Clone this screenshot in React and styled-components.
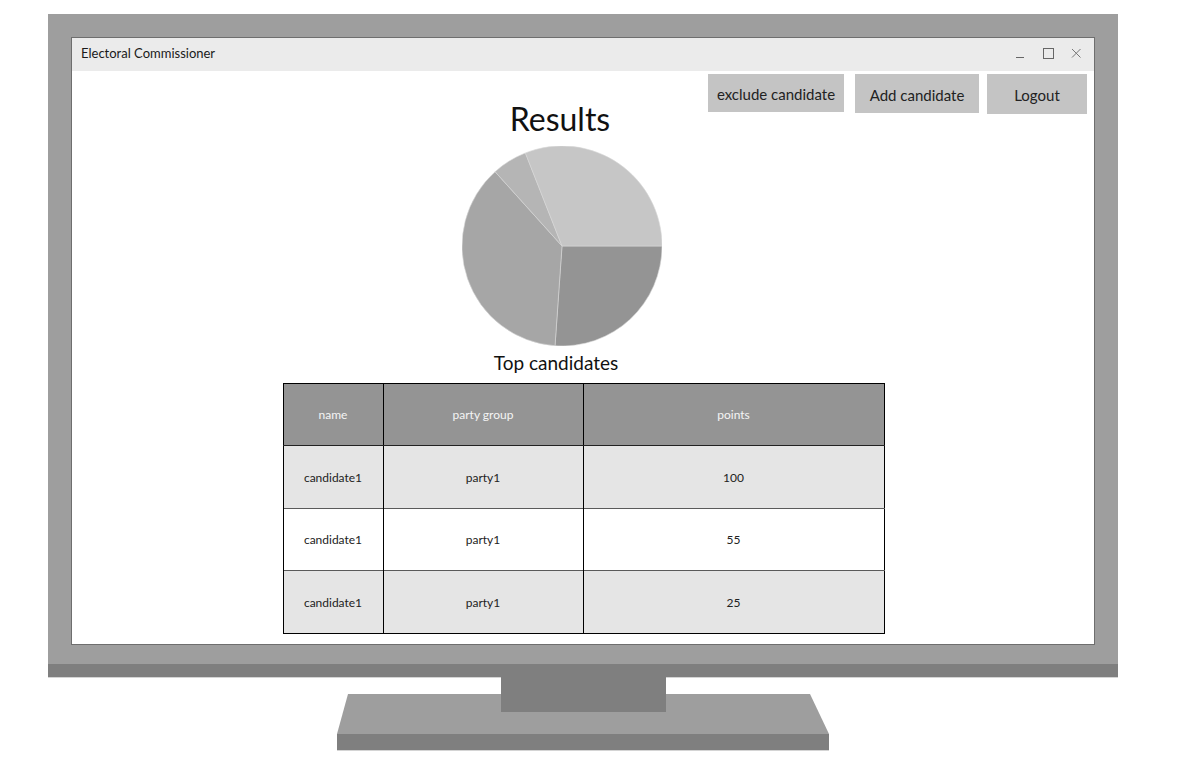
import React from "react";
import styled, { createGlobalStyle } from "styled-components";

const GlobalStyle = createGlobalStyle`
  html, body {
    margin: 0;
    padding: 0;
    background: #ffffff;
    font-family: Lato, "Liberation Sans", sans-serif;
  }
`;

const Page = styled.div`
  width: 1199px;
  height: 766px;
  padding-top: 14px;
  box-sizing: border-box;
`;

const Monitor = styled.div`
  width: 1070px;
  margin-left: 48px;
  display: flex;
  flex-direction: column;
  align-items: center;
`;

const Bezel = styled.div`
  width: 100%;
  box-sizing: border-box;
  background: #9e9e9e;
  padding: 23px 23px 19px 23px;
`;

const BezelBand = styled.div`
  width: 100%;
  height: 13px;
  background: #7f7f7f;
  box-shadow: 0 1px 0 #d4d4d4;
`;

const Screen = styled.div`
  height: 608px;
  box-sizing: border-box;
  border: 1px solid #6e6e6e;
  background: #ffffff;
  display: flex;
  flex-direction: column;
`;

const TitleBar = styled.div`
  height: 33px;
  box-sizing: border-box;
  flex-shrink: 0;
  background: #ebebeb;
  display: flex;
  align-items: center;
  justify-content: space-between;
  padding: 0 12px 3px 9px;
  font-size: 13px;
  color: #1a1a1a;
`;

const WindowControls = styled.div`
  display: flex;
  align-items: center;
  gap: 16px;
`;

const Content = styled.div`
  flex: 1;
  display: flex;
  flex-direction: column;
  align-items: center;
`;

const Toolbar = styled.div`
  align-self: stretch;
  display: flex;
  justify-content: flex-end;
  align-items: flex-start;
  padding: 3px 7px 0 0;
`;

const ToolButton = styled.button`
  width: ${(p) => p.$w}px;
  height: ${(p) => p.$h}px;
  margin-left: ${(p) => p.$gap}px;
  border: none;
  background: #c4c4c4;
  font-family: Lato, "Liberation Sans", sans-serif;
  font-size: 15px;
  color: #222;
  padding: 2px 0 0 0;
  cursor: pointer;
`;

const ChartBlock = styled.div`
  display: flex;
  flex-direction: column;
  align-items: center;
  margin-right: 46px;
  margin-top: -14px;
`;

const Title = styled.h1`
  margin: 0;
  font-size: 32px;
  line-height: 38px;
  font-weight: 400;
  color: #111;
`;

const Pie = styled.svg`
  display: block;
  margin-top: 8px;
  margin-left: 4px;
`;

const Subtitle = styled.h2`
  margin: 5px 0 0 0;
  font-size: 19px;
  line-height: 24px;
  font-weight: 400;
  color: #111;
  position: relative;
  left: -4px;
`;

const Table = styled.table`
  margin-top: 8px;
  margin-left: 1px;
  width: 598px;
  border-collapse: collapse;
  border: 1px solid #000;
  font-size: 12px;
  color: #222;
  table-layout: fixed;
`;

const HeadCell = styled.th`
  height: 61px;
  width: ${(p) => p.$w}px;
  background: #949494;
  color: #f4f4f4;
  font-weight: 400;
  border-left: 1px solid #000;
  border-bottom: 1px solid #222;
  padding: 0;
`;

const Row = styled.tr`
  background: ${(p) => (p.$alt ? "#e5e5e5" : "#ffffff")};
`;

const Cell = styled.td`
  height: ${(p) => p.$h}px;
  text-align: center;
  border-left: 1px solid #000;
  border-top: 1px solid ${(p) => (p.$first ? "#222" : "#5a5a5a")};
  padding: 0;
`;

const Stand = styled.div`
  display: flex;
  flex-direction: column;
  align-items: center;
`;

const Neck = styled.div`
  width: 165px;
  height: 35px;
  background: #7f7f7f;
  position: relative;
  z-index: 1;
`;

const BaseTop = styled.div`
  width: 492px;
  height: 40px;
  margin-top: -18px;
  background: #9e9e9e;
  clip-path: polygon(11px 0, calc(100% - 19px) 0, 100% 100%, 0 100%);
`;

const BaseFoot = styled.div`
  width: 492px;
  height: 16px;
  background: #7f7f7f;
  box-shadow: 0 1px 0 #d4d4d4;
`;

const slices = [
  { d: "M100,100 L200,100 A100,100 0 0 1 93.02,199.76 Z", fill: "#949494" },
  { d: "M100,100 L93.02,199.76 A100,100 0 0 1 33.09,25.69 Z", fill: "#a6a6a6" },
  { d: "M100,100 L33.09,25.69 A100,100 0 0 1 63.35,6.96 Z", fill: "#b5b5b5" },
  { d: "M100,100 L63.35,6.96 A100,100 0 0 1 200,100 Z", fill: "#c6c6c6" },
];

const rows = [
  { name: "candidate1", party: "party1", points: 100, h: 62 },
  { name: "candidate1", party: "party1", points: 55, h: 61 },
  { name: "candidate1", party: "party1", points: 25, h: 62 },
];

const App = () => {
  return (
    <Page>
      <GlobalStyle />
      <Monitor>
        <Bezel>
          <Screen>
            <TitleBar>
              <span>Electoral Commissioner</span>
              <WindowControls>
                <svg width="12" height="12" viewBox="0 0 12 12">
                  <line x1="2" y1="10.5" x2="10" y2="10.5" stroke="#666" strokeWidth="1" />
                </svg>
                <svg width="12" height="12" viewBox="0 0 12 12">
                  <rect x="1.5" y="1.5" width="10" height="10" fill="none" stroke="#666" strokeWidth="1" />
                </svg>
                <svg width="12" height="12" viewBox="0 0 12 12">
                  <path d="M2 2 L10.5 10.5 M10.5 2 L2 10.5" stroke="#777" strokeWidth="1" />
                </svg>
              </WindowControls>
            </TitleBar>
            <Content>
              <Toolbar>
                <ToolButton $w={136} $h={38} $gap={0}>exclude candidate</ToolButton>
                <ToolButton $w={124} $h={39} $gap={11}>Add candidate</ToolButton>
                <ToolButton $w={100} $h={40} $gap={8}>Logout</ToolButton>
              </Toolbar>
              <ChartBlock>
                <Title>Results</Title>
                <Pie width="200" height="200" viewBox="0 0 200 200">
                  {slices.map((s, i) => (
                    <path key={i} d={s.d} fill={s.fill} stroke="#d6d6d6" strokeWidth="0.6" />
                  ))}
                </Pie>
                <Subtitle>Top candidates</Subtitle>
              </ChartBlock>
              <Table>
                <thead>
                  <tr>
                    <HeadCell $w={99}>name</HeadCell>
                    <HeadCell $w={199}>party group</HeadCell>
                    <HeadCell $w={300}>points</HeadCell>
                  </tr>
                </thead>
                <tbody>
                  {rows.map((r, i) => (
                    <Row key={i} $alt={i % 2 === 0}>
                      <Cell $h={r.h} $first={i === 0}>{r.name}</Cell>
                      <Cell $h={r.h} $first={i === 0}>{r.party}</Cell>
                      <Cell $h={r.h} $first={i === 0}>{r.points}</Cell>
                    </Row>
                  ))}
                </tbody>
              </Table>
            </Content>
          </Screen>
        </Bezel>
        <BezelBand />
        <Stand>
          <Neck />
          <BaseTop />
          <BaseFoot />
        </Stand>
      </Monitor>
    </Page>
  );
};

export default App;
